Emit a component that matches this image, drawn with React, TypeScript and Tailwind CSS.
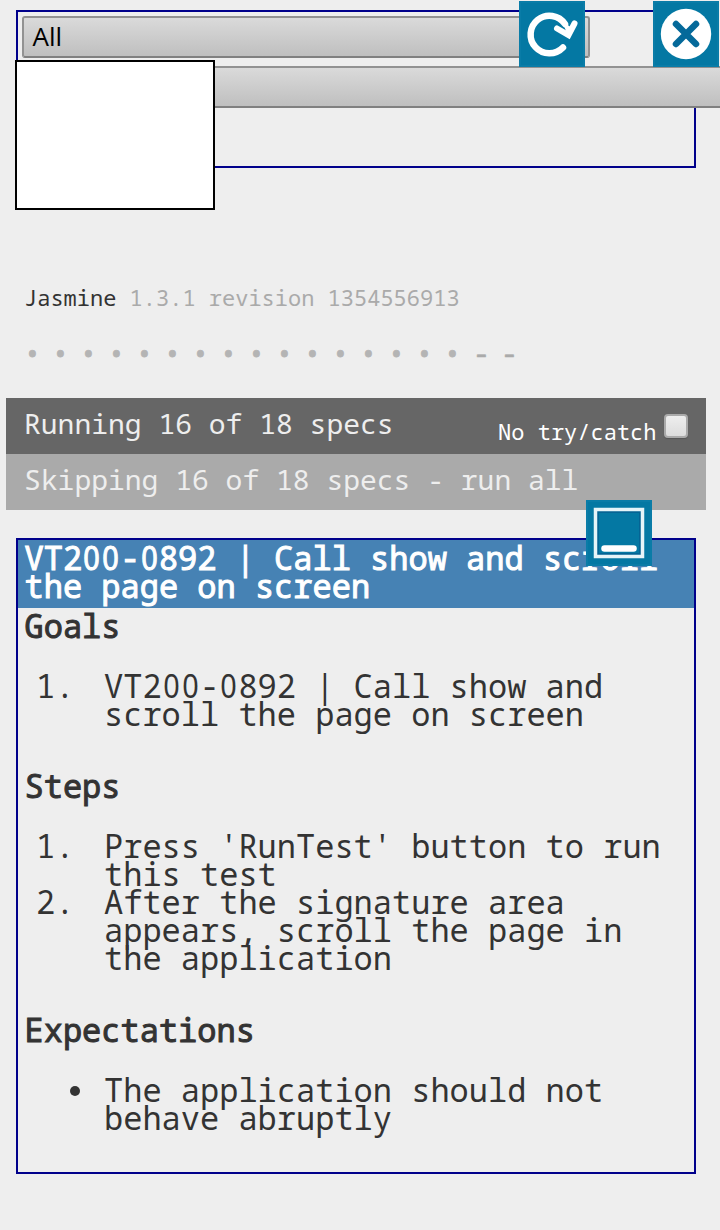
import type { ReactNode } from "react";

const specs = [..."••••••••••••••••--"];

function Tile({ className, children }: { className: string; children: ReactNode }) {
  return (
    <button className={`absolute h-[66px] w-[66px] bg-[#0478a3] ${className}`}>
      <svg viewBox="0 0 66 66" className="block h-[66px] w-[66px]" fill="none">
        <rect x="1" y="1" width="64" height="64" stroke="#0a7ca7" strokeWidth="2" />
        {children}
      </svg>
    </button>
  );
}

function Zero() {
  return <span className="inline-block h-7 w-[19.2px] scale-x-90 text-center align-top font-['Noto_Sans',sans-serif]">0</span>;
}

function TestId() {
  return (
    <>
      VT2<Zero /><Zero />-<Zero />892
    </>
  );
}

function Heading({ children }: { children: ReactNode }) {
  return (
    <h2 className="h-7 pl-[6.5px] [-webkit-text-stroke:1px_#333]">{children}</h2>
  );
}

function Item({ marker, children }: { marker: string; children: ReactNode }) {
  return (
    <li className="flex">
      <span className="w-[86px] shrink-0 pl-[18px] whitespace-pre">
        {marker === "•" ? <i className="mt-[10px] ml-[34px] block size-[10px] rounded-full bg-[#333]" /> : marker}
      </span>
      <span className="whitespace-nowrap">{children}</span>
    </li>
  );
}

const select =
  "block h-[42px] rounded-[3px] border-2 border-[#929292] border-b-[#808080] bg-linear-to-b from-[#dadada] to-[#bfbfbf]";

export default function App() {
  return (
    <main className="relative h-[1230px] w-[720px] overflow-hidden bg-[#eee] font-['Noto_Sans_Mono','DejaVu_Sans_Mono',monospace] text-[#333]">
      <div className="h-[10px]" />
      <section className="mx-4 h-[158px] w-[680px] border-2 border-[#00008b] p-1">
        <div className={`${select} w-[568px] pl-[8.5px] font-['Open_Sans',sans-serif] text-[26px] leading-[36px] text-black`}>All</div>
        <div className={`${select} mt-2 w-[740px]`} />
      </section>

      <header className="mt-[115px] ml-6 h-7 text-[22px] leading-7 whitespace-pre">
        Jasmine <span className="text-[#aaa]">1.3.1 revision 1354556913</span>
      </header>

      <ul className="mt-7 ml-6 flex h-7 text-[28px] leading-7 text-[#b4b4b4]">
        {specs.map((s, i) =>
          s === "•" ? (
            <li key={i} className="w-7 [-webkit-text-stroke:0.8px_#b4b4b4]">{s}</li>
          ) : (
            <li key={i} className="-mt-px w-7 pl-px text-[#aaa] [-webkit-text-stroke:0.6px_#aaa]">{s}</li>
          ),
        )}
      </ul>

      <section className="mx-1.5 mt-[31px] w-[700px] text-[28px] leading-[50px] text-[#eee]">
        <div className="flex h-14 justify-between bg-[#666] pr-[18px] pl-[18px]">
          <span>Running 16 of 18 specs</span>
          <label className="flex text-[22px] leading-[66px] text-white">
            No try/catch
            <span className="mt-4 ml-[7.5px] block size-6 rounded-[4px] border-2 border-[#aaa] bg-linear-to-b from-[#eee] to-[#dcdcdc] shadow-[0_1px_1px_#555]" />
          </label>
        </div>
        <div className="h-14 bg-[#aaa] pl-[18px]">Skipping 16 of 18 specs - run all</div>
      </section>

      <section className="mx-4 mt-7 h-[636px] w-[680px] border-2 border-[#00008b] text-[32px] leading-7">
        <h1 className="h-[68px] bg-[#4682b4] pt-1 pl-[6.5px] whitespace-nowrap text-white [-webkit-text-stroke:1px_white]">
          <TestId /> | Call show and scroll
          <br />
          the page on screen
        </h1>
        <div className="pt-1">
          <Heading>Goals</Heading>
          <ol className="mt-8 mb-[44px]">
            <Item marker="1."><TestId /> | Call show and<br />scroll the page on screen</Item>
          </ol>
          <Heading>Steps</Heading>
          <ol className="mt-8 mb-[44px]">
            <Item marker="1.">Press 'RunTest' button to run<br />this test</Item>
            <Item marker="2.">After the signature area<br />appears, scroll the page in<br />the application</Item>
          </ol>
          <Heading>Expectations</Heading>
          <ul className="mt-8">
            <Item marker="•">The application should not<br />behave abruptly</Item>
          </ul>
        </div>
      </section>

      <div className="absolute top-[60px] left-[15px] h-[150px] w-[200px] border-2 border-black bg-white" />
      <Tile className="top-px left-[519px]">
        <path d="M44 46.5A18.8 18.8 0 1 1 46 23" stroke="white" strokeWidth="6.5" strokeLinecap="round" />
        <path d="M38 27.5L49.5 34L55.5 22.5" stroke="white" strokeWidth="6" strokeLinecap="round" />
        <path d="M43 20L49 35L53 27Z" fill="white" />
      </Tile>
      <Tile className="top-px left-[653px]">
        <circle cx="33" cy="33" r="25.2" fill="white" />
        <path d="M23 23L43 43M43 23L23 43" stroke="#04699a" strokeWidth="6.5" strokeLinecap="round" />
      </Tile>
      <Tile className="top-[500px] left-[586px]">
        <rect x="11.5" y="11.5" width="43" height="43" stroke="#056494" strokeWidth="3" />
        <rect x="9.5" y="9.5" width="47" height="47" stroke="#e6f4f8" strokeWidth="3.5" />
        <path d="M18.5 48.5H47.5" stroke="white" strokeWidth="6.5" strokeLinecap="round" />
      </Tile>
    </main>
  );
}
